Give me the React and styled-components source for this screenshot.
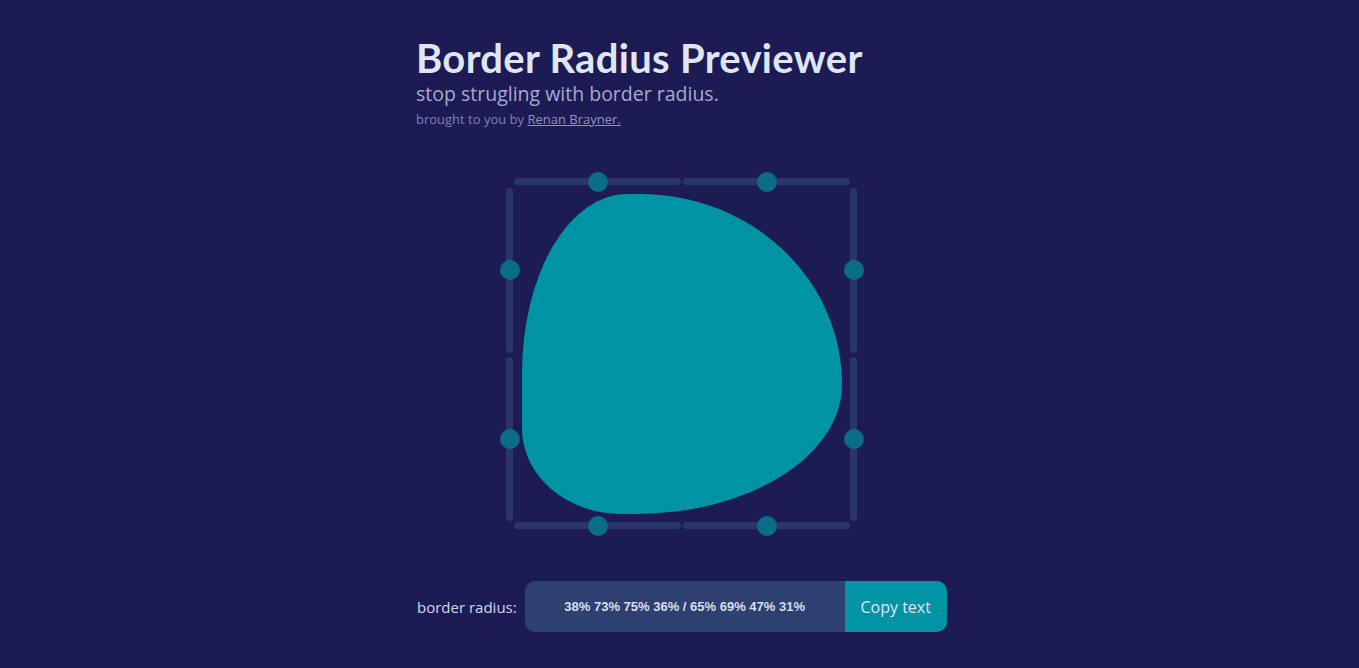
import React from "react";
import styled, { createGlobalStyle } from "styled-components";

const GlobalStyle = createGlobalStyle`
  html, body {
    margin: 0;
    padding: 0;
    background: #1d1b53;
  }
  body {
    font-family: "Open Sans", "Lato", sans-serif;
    min-height: 668px;
  }
`;

const Container = styled.main`
  width: 527px;
  margin: 0 auto;
  padding-top: 34px;
  display: flex;
  flex-direction: column;
`;

const Title = styled.h1`
  margin: 0;
  font-family: "Lato", sans-serif;
  font-weight: 700;
  font-size: 40px;
  line-height: 48px;
  color: #dde6f2;
  letter-spacing: 0.3px;
`;

const Subtitle = styled.p`
  margin: 0;
  font-size: 19.5px;
  line-height: 24px;
  color: #a7aacd;
`;

const Credit = styled.p`
  margin: 4px 0 0;
  font-size: 13px;
  line-height: 18px;
  color: #7d80ae;
`;

const Link = styled.a`
  color: #8f92bd;
  text-decoration: underline;
`;

const Stage = styled.section`
  display: grid;
  grid-template-columns: 7px 337px 7px;
  grid-template-rows: 7px 337px 7px;
  margin: 50px 0 0 90px;
`;

const Rail = styled.div`
  display: flex;
  flex-direction: ${(p) => (p.$vertical ? "column" : "row")};
  gap: ${(p) => (p.$vertical ? 4 : 2)}px;
  padding: ${(p) => (p.$vertical ? "3px 0 1px" : "0 0 0 1px")};
  grid-column: ${(p) => p.$col};
  grid-row: ${(p) => p.$row};
`;

const Segment = styled.span`
  flex: 1;
  display: flex;
  align-items: center;
  justify-content: center;
  background: #2a3766;
  border-radius: 4px;
`;

const Handle = styled.span`
  flex-shrink: 0;
  width: 20px;
  height: 20px;
  border-radius: 50%;
  background: #0a6d88;
`;

const ShapeCell = styled.div`
  grid-column: 2;
  grid-row: 2;
  display: flex;
  align-items: center;
  justify-content: center;
`;

const Shape = styled.div`
  flex-shrink: 0;
  width: 320px;
  height: 320px;
  background: #0093a3;
  border-radius: 38% 73% 75% 36% / 65% 69% 47% 31%;
`;

const Controls = styled.div`
  display: flex;
  align-items: center;
  margin-top: 52px;
`;

const Label = styled.label`
  flex-shrink: 0;
  white-space: nowrap;
  font-size: 15px;
  color: #d3d7ea;
  margin-right: 8px;
  padding-left: 1px;
`;

const Field = styled.div`
  flex-shrink: 0;
  display: flex;
  height: 51px;
  border-radius: 10px;
  overflow: hidden;
`;

const Output = styled.input`
  width: 320px;
  border: none;
  outline: none;
  background: #2c4170;
  color: #dadded;
  font-family: "Liberation Sans", Arial, sans-serif;
  font-weight: 700;
  font-size: 13px;
  text-align: center;
  padding: 0;
`;

const CopyButton = styled.button`
  width: 102px;
  border: none;
  background: #0093a3;
  color: #dfe9f2;
  font-family: "Open Sans", sans-serif;
  font-size: 16px;
  cursor: pointer;
  padding: 0;
`;

const rails = [
  { key: "top", col: 2, row: 1 },
  { key: "bottom", col: 2, row: 3 },
  { key: "left", col: 1, row: 2, vertical: true },
  { key: "right", col: 3, row: 2, vertical: true },
];

const App = () => {
  return (
    <>
      <GlobalStyle />
      <Container>
        <Title>Border Radius Previewer</Title>
        <Subtitle>stop strugling with border radius.</Subtitle>
        <Credit>
          brought to you by <Link href="#">Renan Brayner.</Link>
        </Credit>
        <Stage>
          {rails.map((r) => (
            <Rail key={r.key} $col={r.col} $row={r.row} $vertical={r.vertical}>
              <Segment>
                <Handle />
              </Segment>
              <Segment>
                <Handle />
              </Segment>
            </Rail>
          ))}
          <ShapeCell>
            <Shape />
          </ShapeCell>
        </Stage>
        <Controls>
          <Label>border radius:</Label>
          <Field>
            <Output readOnly value="38% 73% 75% 36% / 65% 69% 47% 31%" />
            <CopyButton>Copy text</CopyButton>
          </Field>
        </Controls>
      </Container>
    </>
  );
};

export default App;
